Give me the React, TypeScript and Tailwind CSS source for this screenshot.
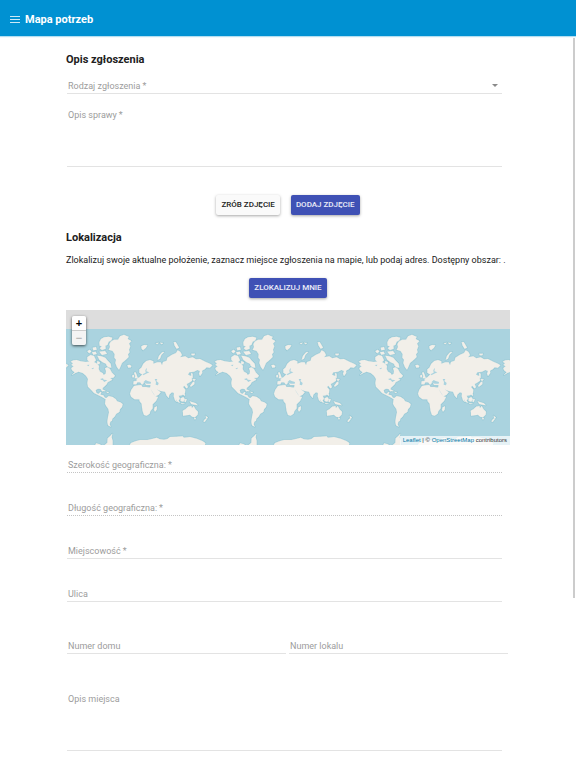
import React from "react";

type FieldProps = {
  id: string;
  label: string;
  required?: boolean;
  dotted?: boolean;
};

function FieldLabel({ id, label, required, className = "bottom-[2px]" }: FieldProps & { className?: string }) {
  return (
    <label htmlFor={id} className={`pointer-events-none absolute left-px text-[9px] leading-[12px] text-[#9c9c9c] ${className}`}>
      {label}
      {required && <span className="pl-[2px]">*</span>}
    </label>
  );
}

function TextField(props: FieldProps) {
  return (
    <div className="relative h-[18px]">
      <input
        id={props.id}
        type="text"
        required={props.required}
        disabled={props.dotted}
        className={`block h-full w-full border-b bg-transparent px-px text-[9px] text-[#212121] outline-none ${
          props.dotted ? "border-dotted border-[#c4c4c4]" : "border-[#e3e3e3]"
        }`}
      />
      <FieldLabel {...props} />
    </div>
  );
}

function AreaField(props: FieldProps) {
  return (
    <div className="relative h-[60px]">
      <textarea
        id={props.id}
        required={props.required}
        className="block h-full w-full resize-none border-b border-[#e3e3e3] bg-transparent px-px pt-[2px] text-[9px] leading-[12px] text-[#212121] outline-none"
      />
      <FieldLabel {...props} className="top-[2px]" />
    </div>
  );
}

function Button({ children, primary }: { children: React.ReactNode; primary?: boolean }) {
  return (
    <button
      type="button"
      className={`h-[20px] rounded-[2px] px-[5px] text-[8px] font-medium leading-[20px] shadow-[0_1px_3px_rgba(0,0,0,0.35)] ${
        primary ? "bg-[#3f51b5] text-white/90" : "bg-[#fafafa] text-[#212121]"
      }`}
    >
      {children}
    </button>
  );
}

const LAND = [
  // North America
  "M32,170L40,166L50,165L62,169L78,171L92,169L104,172L112,177L117,183L116,192L120,200L128,204L131,210L137,206L138,198L135,190L142,187L150,192L155,202L165,212L160,218L150,219L157,224L150,228L143,232L140,238L134,244L128,249L127,260L122,252L114,251L107,255L109,263L115,267L121,261L124,262L121,269L130,271L133,276L140,281L136,282L126,276L114,270L102,264L93,254L84,245L82,234L84,222L78,212L68,204L56,200L46,204L36,210L44,202L36,196L34,189L41,184L34,180L39,175Z",
  // South America
  "M138,280L146,273L158,276L168,283L171,289L181,292L188,297L186,306L180,313L178,321L169,326L163,336L157,341L156,347L151,350L149,358L152,365L144,361L142,350L144,336L147,322L145,312L139,304L135,296L136,288Z",
  // Greenland
  "M146,134L150,126L148,118L152,110L162,104L174,104L180,94L192,89L200,93L206,95L203,102L214,108L207,116L211,124L207,134L209,142L204,148L206,156L196,166L186,174L181,186L177,194L171,187L166,174L168,164L163,158L164,148L158,138Z",
  // Canadian Arctic
  "M119,122L118,112L123,102L132,97L146,95L157,98L154,106L146,110L142,120L136,122L137,131L126,135L119,130L126,124Z",
  "M112,152L124,154L136,158L142,166L152,176L154,188L146,187L140,182L138,176L128,172L118,164Z",
  "M82,156L92,150L102,153L108,166L100,173L88,170L82,165Z",
  "M82,138L90,134L94,140L87,145ZM98,128L108,126L110,134L100,136ZM96,142L107,140L110,147L100,149ZM118,140L135,138L141,146L126,150ZM112,168L120,172L118,178L111,176Z",
  // Iceland and the British Isles
  "M202,181L208,179L214,182L213,187L205,188ZM222,203L227,202L231,212L233,219L224,220L226,213ZM217,211L222,210L222,217L217,217Z",
  // Eurasia
  "M220,238L221,229L230,228L230,221L238,217L244,211L248,209L238,203L238,193L244,188L250,176L259,168L270,165L280,169L280,176L292,172L302,172L306,181L309,171L320,167L322,158L336,149L348,144L353,136L361,140L366,150L360,157L376,154L385,160L398,157L408,163L420,162L436,170L450,176L457,181L450,188L440,187L434,193L426,197L427,204L420,213L417,206L420,198L412,195L402,200L388,202L384,209L395,214L396,227L386,234L380,237L384,247L379,250L373,242L369,246L376,254L375,264L366,271L356,272L360,281L354,288L347,278L350,291L345,286L341,274L342,264L336,262L328,269L326,279L320,272L315,260L302,258L290,253L302,262L296,269L284,275L277,262L270,248L272,240L258,240L254,232L246,239L240,232L232,232L229,238Z",
  // Africa
  "M222,243L234,241L244,240L247,246L258,246L270,248L276,260L284,274L294,276L288,288L278,298L278,310L271,319L269,326L260,332L252,330L248,319L246,307L245,296L239,289L238,283L224,283L214,276L210,266L214,254Z",
  "M291,304L290,314L285,320L282,314L284,307Z",
  // Australia and the Pacific islands
  "M368,317L376,313L384,305L394,303L396,310L401,303L406,312L414,320L413,329L405,337L396,335L390,329L380,331L369,332L369,324Z",
  "M402,339L408,339L405,344ZM389,289L398,292L408,295L413,301L404,299L394,297ZM362,280L370,276L374,282L370,290L362,288ZM346,278L355,286L360,293L353,291ZM362,294L374,296L366,297ZM374,283L380,282L378,290L374,291ZM370,262L375,266L374,273L370,269ZM437,332L444,338L439,342ZM436,341L440,343L434,351L430,349ZM398,232L403,230L403,238L393,245L390,243ZM398,222L407,223L402,229ZM393,204L398,206L398,219L394,217Z",
  // Arctic islands
  "M244,124L252,120L262,121L258,128L249,136L245,131ZM293,164L297,152L306,142L313,141L304,150L300,161ZM341,112L347,111L353,121L357,128L350,131L344,122ZM394,146L405,146L403,151L395,151ZM287,115L296,113L292,118ZM300,113L309,114L305,118Z",
  // Caribbean
  "M122,250L130,254L137,258L131,259ZM139,260L147,262L142,264Z",
  // Antarctica
  "M206,425L213,414L226,409L240,405L262,405L276,402L290,398L300,403L312,404L322,402L330,396L350,395L368,394L372,398L390,396L410,401L427,408L436,414L434,425Z",
  "M104,425L108,415L120,418L128,425ZM128,425L142,413L143,400L150,394L157,386L155,397L158,408L158,425Z",
].join("");

const INLAND_WATER = [
  "M250,232L257,225L263,228L273,231L272,236L260,236Z",
  "M284,222L292,222L289,228L296,234L294,241L287,239L288,231Z",
  "M249,207L257,203L256,195L261,188L259,199L268,202L257,207L250,211Z",
  "M120,222L129,220L132,226L125,225ZM128,226L134,224L142,226L133,231ZM80,180L88,179L86,184ZM94,190L102,188L99,193Z",
  "M272,252L282,268L285,274L277,261Z",
].join("");

function WorldMap() {
  return (
    <svg aria-hidden="true" viewBox="0 0 1332 405" preserveAspectRatio="xMinYMin slice" className="block h-full w-full">
      <rect width="1332" height="405" fill="#ddd" />
      <rect y="57" width="1332" height="348" fill="#aad3df" />
      <defs>
        <g id="world" strokeLinejoin="round">
          <path d={LAND} fill="#f2efe9" stroke="#93c7d5" strokeWidth="5" />
          <path d={LAND} fill="#f2efe9" stroke="#f2efe9" strokeWidth="1" />
          <path d={INLAND_WATER} fill="#aad3df" />
        </g>
      </defs>
      {[-450, -18, 414, 846, 1278].map((x) => (
        <use key={x} href="#world" x={x} y={-15} />
      ))}
    </svg>
  );
}

function MapPanel() {
  return (
    <section aria-label="Mapa" className="relative mt-[12px] h-[135px] overflow-hidden">
      <WorldMap />
      <div className="absolute left-[6px] top-[6px] flex w-[14px] flex-col overflow-hidden rounded-[2px] font-['Liberation_Sans',sans-serif] text-[11px] font-bold leading-[14px] shadow-[0_1px_3px_rgba(0,0,0,0.65)]">
        <button type="button" aria-label="Zoom in" className="h-[15px] border-b border-[#ccc] bg-white text-black">
          +
        </button>
        <button type="button" aria-label="Zoom out" disabled className="h-[14px] bg-[#f4f4f4] text-[#bbb]">
          −
        </button>
      </div>
      <div className="absolute bottom-0 right-0 whitespace-nowrap bg-white/70 px-[3px] font-['Liberation_Sans',sans-serif] text-[6px] leading-[9px] text-[#333]">
        <a href="#leaflet" className="text-[#0078a8]">Leaflet</a> | © <a href="#osm" className="text-[#0078a8]">OpenStreetMap</a> contributors
      </div>
    </section>
  );
}

export default function App() {
  return (
    <div className="relative min-h-screen bg-white font-['Roboto',sans-serif] text-[#212121]">
      <header className="flex h-[36px] items-center gap-[5px] bg-[#0091d2] pl-[10px] pt-[2px] text-white shadow-[0_1px_1px_rgba(0,145,210,0.3)]">
        <button type="button" aria-label="Menu" className="flex w-[10px] flex-col gap-[2px]">
          <span className="h-px w-full bg-white/80" />
          <span className="h-px w-full bg-white/80" />
          <span className="h-px w-full bg-white/80" />
        </button>
        <h1 className="text-[11px] font-bold leading-[15px]">Mapa potrzeb</h1>
      </header>
      <div aria-hidden="true" className="absolute right-px top-[38px] h-[560px] w-[2px] bg-[#ccc]" />

      <main className="px-[66px] pb-[17px] pt-[16px]">
        <form>
          <h2 className="text-[11px] font-bold leading-[15px]">Opis zgłoszenia</h2>
          <div className="ml-px mr-[8px] mt-[9px]">
            <div className="relative h-[18px]">
              <select
                id="kind"
                required
                defaultValue=""
                className="block h-full w-full appearance-none border-b border-[#e3e3e3] bg-transparent px-px text-[9px] outline-none"
              >
                <option value="" />
              </select>
              <FieldLabel id="kind" label="Rodzaj zgłoszenia" required />
              <svg aria-hidden="true" viewBox="0 0 6 3" className="pointer-events-none absolute right-[4px] top-[8px] h-[3px] w-[6px] fill-[#8a8a8a]">
                <path d="M0 0h6L3 3z" />
              </svg>
            </div>
            <div className="mt-[13px]">
              <AreaField id="case" label="Opis sprawy" required />
            </div>
          </div>

          <div className="mt-[28px] flex justify-center gap-[11px]">
            <Button>ZRÓB ZDJĘCIE</Button>
            <Button primary>DODAJ ZDJĘCIE</Button>
          </div>

          <h2 className="mt-[15px] text-[11px] font-bold leading-[15px]">Lokalizacja</h2>
          <p className="mt-[8px] whitespace-nowrap text-[9px] leading-[14px]">
            Zlokalizuj swoje aktualne położenie, zaznacz miejsce zgłoszenia na mapie, lub podaj adres. Dostępny obszar: .
          </p>
          <div className="mt-[11px] flex justify-center">
            <Button primary>ZLOKALIZUJ MNIE</Button>
          </div>

          <MapPanel />

          <div className="ml-px mr-[8px] mt-[10px] flex flex-col gap-[25px]">
            <TextField id="lat" label="Szerokość geograficzna:" required dotted />
            <TextField id="lng" label="Długość geograficzna:" required dotted />
            <TextField id="city" label="Miejscowość" required />
            <TextField id="street" label="Ulica" />
          </div>
          <div className="ml-px mr-[2px] mt-[34px] grid grid-cols-2 gap-[3px]">
            <TextField id="house" label="Numer domu" />
            <TextField id="flat" label="Numer lokalu" />
          </div>
          <div className="ml-px mr-[8px] mt-[37px]">
            <AreaField id="place" label="Opis miejsca" />
          </div>
        </form>
      </main>
    </div>
  );
}
